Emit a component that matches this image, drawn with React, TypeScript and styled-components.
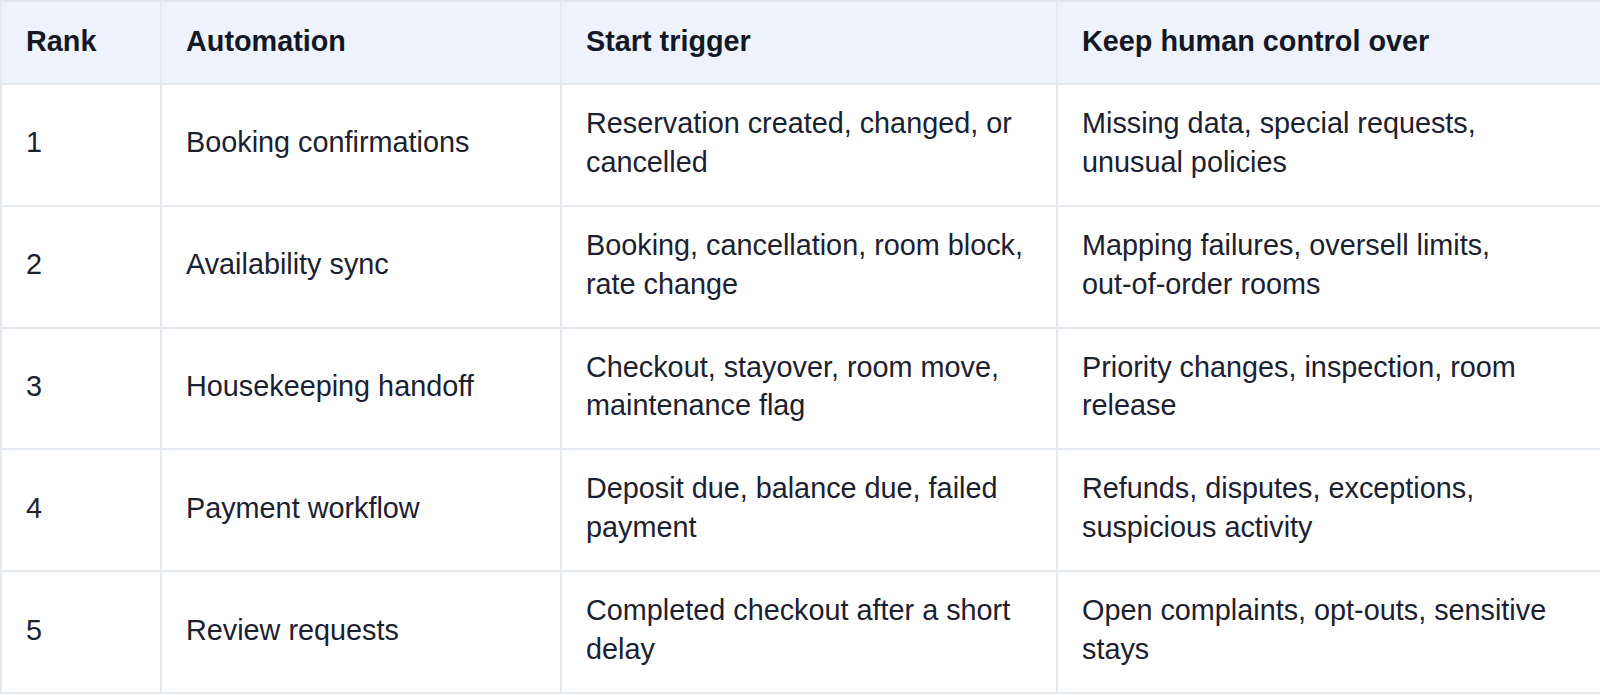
import type { ReactNode } from 'react'
import { createGlobalStyle, styled } from 'styled-components'

const Global = createGlobalStyle`
  html, body { margin: 0; padding: 0; background: #ffffff; }
  body {
    font-family: "Liberation Sans", Arial, sans-serif;
    color: #1b2130;
  }
`

const Table = styled.table`
  width: 1598px;
  table-layout: fixed;
  border-collapse: collapse;
  border: 2px solid #e3e8f1;
  font-size: 28.8px;
  line-height: 38.9px;
`

const HeadCell = styled.th`
  background: #eef2fd;
  color: #121826;
  font-weight: 700;
  text-align: left;
  vertical-align: middle;
  padding: 20px 25px 22px 24px;
  height: 38.9px;
  border: 2px solid #e3e8f1;
`

const Cell = styled.td`
  text-align: left;
  vertical-align: middle;
  padding: 19px 25px 23px 24px;
  border: 2px solid #e3e8f1;
`

const NoWrap = styled.span`
  white-space: nowrap;
`

type Row = {
  rank: number
  automation: string
  trigger: string
  control: ReactNode
}

const rows: Row[] = [
  {
    rank: 1,
    automation: 'Booking confirmations',
    trigger: 'Reservation created, changed, or cancelled',
    control: 'Missing data, special requests, unusual policies',
  },
  {
    rank: 2,
    automation: 'Availability sync',
    trigger: 'Booking, cancellation, room block, rate change',
    control: (
      <>
        Mapping failures, oversell limits, <NoWrap>out-of-order</NoWrap> rooms
      </>
    ),
  },
  {
    rank: 3,
    automation: 'Housekeeping handoff',
    trigger: 'Checkout, stayover, room move, maintenance flag',
    control: 'Priority changes, inspection, room release',
  },
  {
    rank: 4,
    automation: 'Payment workflow',
    trigger: 'Deposit due, balance due, failed payment',
    control: 'Refunds, disputes, exceptions, suspicious activity',
  },
  {
    rank: 5,
    automation: 'Review requests',
    trigger: 'Completed checkout after a short delay',
    control: 'Open complaints, opt-outs, sensitive stays',
  },
]

const columns = [
  { label: 'Rank', width: 160 },
  { label: 'Automation', width: 400 },
  { label: 'Start trigger', width: 496 },
  { label: 'Keep human control over', width: 544 },
]

export default function App() {
  return (
    <>
      <Global />
      <Table>
        <colgroup>
          {columns.map((c) => (
            <col key={c.label} style={{ width: c.width }} />
          ))}
        </colgroup>
        <thead>
          <tr>
            {columns.map((c) => (
              <HeadCell key={c.label}>{c.label}</HeadCell>
            ))}
          </tr>
        </thead>
        <tbody>
          {rows.map((r) => (
            <tr key={r.rank}>
              <Cell>{r.rank}</Cell>
              <Cell>{r.automation}</Cell>
              <Cell>{r.trigger}</Cell>
              <Cell>{r.control}</Cell>
            </tr>
          ))}
        </tbody>
      </Table>
    </>
  )
}
